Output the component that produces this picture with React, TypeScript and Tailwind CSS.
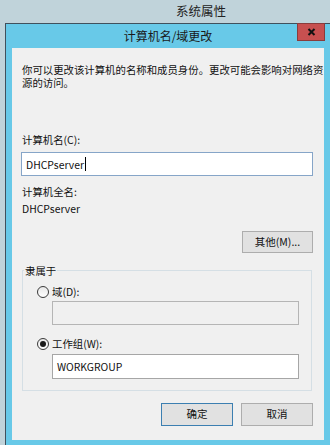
import React from "react";

const font = { fontFamily: "'Noto Sans CJK SC', 'Noto Sans', sans-serif" };

function Radio({ checked }: { checked?: boolean }) {
  return (
    <span className="flex h-[12px] w-[12px] items-center justify-center rounded-full border border-[#3a3a3a] bg-gradient-to-b from-[#e8e8e8] to-white">
      {checked && <span className="h-[6px] w-[6px] rounded-full bg-[#1a1a1a]" />}
    </span>
  );
}

function Button({ label, primary }: { label: string; primary?: boolean }) {
  return (
    <button
      className={
        "h-[23px] w-[72px] bg-[#e1e1e1] text-[10.5px] leading-none text-[#111] border " +
        (primary ? "border-[#3c7fb1]" : "border-[#adadad]")
      }
    >
      {label}
    </button>
  );
}

export default function App() {
  return (
    <div className="relative flex h-[445px] w-[330px] flex-col overflow-hidden bg-[#c0d3da] text-[#111]" style={font}>
      {/* parent window title */}
      <div className="flex h-[23px] items-center pl-[176px] text-[12.5px] leading-none text-[#222]">系统属性</div>

      {/* dialog */}
      <div className="relative ml-[5px] flex w-[325px] flex-1 flex-col border-l border-t border-[#40505c] bg-[#68c9e8]">
        <div className="flex h-[24px] items-center justify-center text-[12px] leading-none text-[#1a1a1a]">
          计算机名/域更改
        </div>

        {/* close button sits over the frame */}
        <div className="absolute right-[5px] top-[-1px] z-10 flex h-[18px] w-[28px] items-center justify-center border border-[#8a3c3c] bg-[#c75050]">
          <svg width="9" height="8" viewBox="0 0 9 8">
            <path d="M1.5 1 L7.5 7 M7.5 1 L1.5 7" stroke="#111" strokeWidth="2" />
          </svg>
        </div>

        <div className="mx-[6px] flex h-[392px] flex-col overflow-hidden bg-[#f0f0f0] pl-[9px] pr-[11px] pt-[15px] text-[10.4px] leading-[13px]">
          <p className="ml-[1px] whitespace-nowrap">
            你可以更改该计算机的名称和成员身份。更改可能会影响对网络资
            <br />
            源的访问。
          </p>

          <div className="ml-[1px] mt-[44px]">计算机名(C):</div>
          <div className="mt-[6px] flex h-[24px] items-center border border-[#86a5c8] bg-white pl-[4px]">
            <span>DHCPserver</span>
            <span className="ml-[1px] h-[14px] w-px bg-black" />
          </div>

          <div className="ml-[1px] mt-[9px]">计算机全名:</div>
          <div className="ml-[1px] mt-[4px]">DHCPserver</div>

          <div className="mt-[16px] flex justify-end">
            <button className="h-[22px] w-[71px] border border-[#adadad] bg-[#e1e1e1] text-[10.5px] leading-none">其他(M)...</button>
          </div>

          <fieldset className="mx-[1px] mt-[11px] h-[127px] border border-[#d5dfe5] px-0 pb-0 pt-0">
            <legend className="ml-[1px] px-[1px] leading-[13px]">隶属于</legend>
            <div className="mt-[8px] flex items-center pl-[14px]">
              <Radio />
              <span className="ml-[3px]">域(D):</span>
            </div>
            <div className="ml-[29px] mr-[12px] mt-[3px] h-[24px] border border-[#b5b5b5] bg-[#f0f0f0]" />
            <div className="mt-[12px] flex items-center pl-[14px]">
              <Radio checked />
              <span className="ml-[3px]">工作组(W):</span>
            </div>
            <div className="ml-[29px] mr-[12px] mt-[4px] flex h-[25px] items-center border border-[#a6a6a6] bg-white pl-[4px]">
              WORKGROUP
            </div>
          </fieldset>

          <div className="mt-[12px] flex justify-end gap-[8px]">
            <Button label="确定" primary />
            <Button label="取消" />
          </div>
        </div>
      </div>
    </div>
  );
}
